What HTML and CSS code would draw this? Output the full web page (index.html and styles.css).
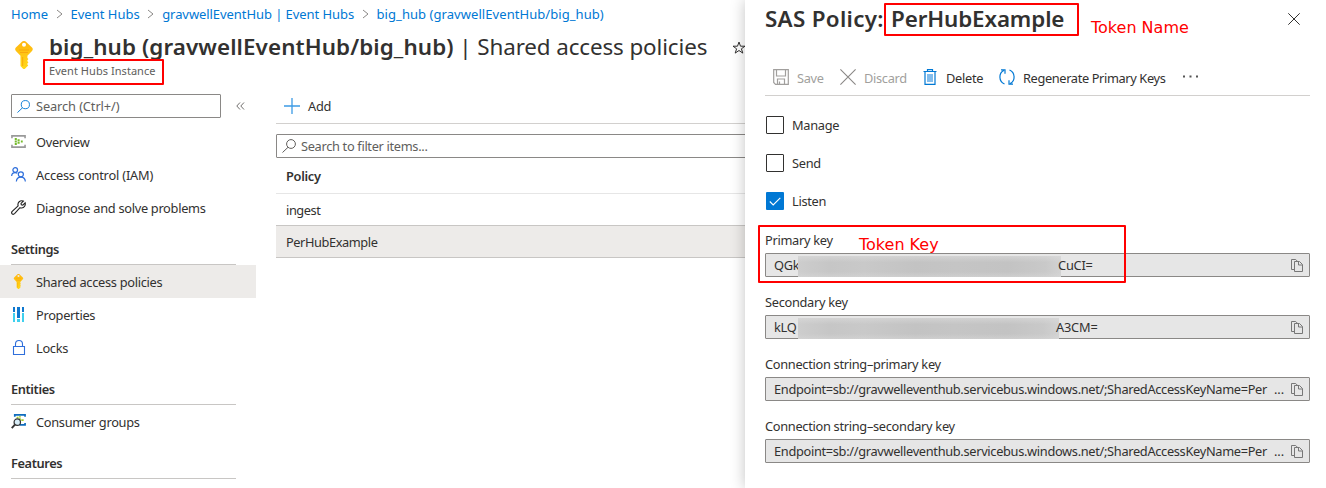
FILE: index.html
```html
<!DOCTYPE html>
<html lang="en">
<head>
<meta charset="utf-8">
<title>Shared access policies</title>
<link rel="stylesheet" href="styles.css">
</head>
<body>
<svg width="0" height="0" class="defs">
  <defs>
    <linearGradient id="gold" x1="0" y1="0" x2="0" y2="1"><stop offset="0" stop-color="#ffb50f"/><stop offset="1" stop-color="#ffd91a"/></linearGradient>
    <symbol id="key" viewBox="0 0 18 28">
      <path fill="url(#gold)" fill-rule="evenodd" d="M9 0c1 0 1.600.3 2.200.9l5.800 5.700c1 1 1 2.200 0 3.300l-4.600 4.800V17l1 1-1 1.200v1l1 1-1 1.200v1l.8 1-3 3.200c-.8.800-1.600.800-2.400 0L5.500 25V14.700L.9 9.900c-1-1.100-1-2.300 0-3.300L6.700.9C7.300.3 8 0 9 0zm0 1.700a2 2 0 1 0 0 4 2 2 0 0 0 0-4z"/>
      <path fill="#f9a80c" d="M4 8.500h10v1.100H4zM5 11h8v1H5zM7.200 16h1v9h-1z"/>
    </symbol>
    <symbol id="copy" viewBox="0 0 12 13">
      <path fill="none" stroke="#777" d="M3.500 10.500h-3V.5h4.200l1.500 1.500M3.500 2.500h5l3 3v7h-8zM7.500 2.500v3.500h4"/>
    </symbol>
    <symbol id="lens" viewBox="0 0 14 14">
      <circle cx="9" cy="5" r="4.400" fill="none" stroke="currentColor"/><path d="M6 8.300.5 13.500" stroke="currentColor"/>
    </symbol>
    <symbol id="sep" viewBox="0 0 7 10"><path d="M1 1l5 4-5 4" fill="none" stroke="#8a8886"/></symbol>
  </defs>
</svg>

<div class="page">
  <nav class="crumbs">
    <a class="c1">Home</a><svg><use href="#sep"/></svg>
    <a class="c2">Event Hubs</a><svg><use href="#sep"/></svg>
    <a class="c3">gravwellEventHub | Event Hubs</a><svg><use href="#sep"/></svg>
    <a class="c4">big_hub (gravwellEventHub/big_hub)</a>
  </nav>

  <header class="title">
    <svg class="bigkey"><use href="#key"/></svg>
    <div class="titletext">
      <h1><b>big_hub (gravwellEventHub/big_hub)</b><span> | Shared access policies</span></h1>
      <p>Event Hubs Instance</p>
      <i class="mark mark-sub"></i>
    </div>
    <svg class="star" viewBox="0 0 14 13"><path d="M7 1l1.500 4.200H13L9.400 7.800l1.400 4.300L7 9.500l-3.800 2.600 1.400-4.300L1 5.200h4.500z" fill="none" stroke="#323130" stroke-width="1"/></svg>
  </header>

  <div class="body">
    <aside>
      <div class="find"><div class="box blue"><svg><use href="#lens"/></svg><span>Search (Ctrl+/)</span></div>
        <svg class="fold" viewBox="0 0 9 8"><path d="M4 .5.8 4 4 7.500M8 .5 4.800 4 8 7.500" fill="none" stroke="#605e5c" stroke-width=".9"/></svg></div>
      <ul>
        <li><svg viewBox="0 0 16 16"><path d="M1 4.500V2h14v2.500M1 11.500V14h14v-2.500" fill="none" stroke="#999" stroke-width="1.700"/><path fill="#76bc2d" d="M4 4.200h2.200v2.100H4zM4 6.900h2.200V9H4zM4 9.600h2.200v2.100H4zM7 5.600h2.200v2.100H7zM7 8.300h2.200v2.100H7zM10.500 7h2v2h-2z"/></svg><span>Overview</span></li>
        <li><svg viewBox="0 0 16 16"><g fill="none" stroke="#2f6fdb" stroke-width="1.300"><circle cx="4.500" cy="3.200" r="2.500"/><circle cx="10.500" cy="7.800" r="2.700"/><path d="M.7 9.500C.8 7.300 2 5.900 4.300 5.900c1 0 1.800.3 2.500.8M5.700 15.500c.2-3 2-4.700 4.800-4.700s4.600 1.700 4.800 4.700"/></g></svg><span class="iam">Access control (IAM)</span></li>
        <li><svg viewBox="0 0 16 16"><path d="M13.200 1.200 10.700 3.600l.3 1.500 1.600.3 2.500-2.400c.7 2.700-1 5.300-3.700 5.500-.8 0-1.200-.1-1.800-.3L3.800 14.600c-1.900 1.700-4.200-.6-2.500-2.400L7.600 6.200C6.600 2.700 9.700-.2 13.200 1.200z" fill="none" stroke="#222" stroke-width="1.200"/></svg><span>Diagnose and solve problems</span></li>
      </ul>
      <h2>Settings</h2>
      <ul>
        <li class="on"><svg><use href="#key"/></svg><span>Shared access policies</span></li>
        <li><svg viewBox="0 0 15 15"><path fill="#0f78cf" d="M2 0h2v5H2zM6 0h3v11H6zM11 0h2v5h-2z"/><path fill="#3fd0ee" d="M2 6h2v9H2zM6 12h3v3H6zM11 6h2v9h-2z"/></svg><span>Properties</span></li>
        <li><svg viewBox="0 0 15 15"><path d="M2.500 6.500h11v8h-11zM4.500 6.500V4c0-4.600 7-4.600 7 0v2.500" fill="none" stroke="#2f6fdb" stroke-width="1.100"/></svg><span>Locks</span></li>
      </ul>
      <h2>Entities</h2>
      <ul>
        <li><svg viewBox="0 0 16 16"><path d="M4 3V1h11v2M9 11.500h6v-2" fill="none" stroke="#0f6cbd" stroke-width="1.800"/><path fill="#a4cf2c" d="M6 3h2v1.500H6zM8.500 4.500h2V6h-2zM11 5.500h2.500v2H11zM8.500 2.500h2v1.200h-2z"/><circle cx="6.700" cy="8.700" r="3.400" fill="#d8eef8" stroke="#333" stroke-width="1.300"/><path d="M4.200 11.300.8 15" stroke="#333" stroke-width="2"/></svg><span>Consumer groups</span></li>
      </ul>
      <h2>Features</h2>
    </aside>

    <main>
      <div class="add"><svg viewBox="0 0 16 16"><path d="M8 0v16M0 8h16" stroke="#3c9be5" stroke-width="1.300"/></svg><span>Add</span></div>
      <div class="box filter"><svg><use href="#lens"/></svg><span>Search to filter items...</span></div>
      <div class="th"><span>Policy</span></div>
      <div class="td"><span>ingest</span></div>
      <div class="td on"><span>PerHubExample</span></div>
    </main>
  </div>
</div>

<section class="blade">
  <div class="bladehead">
    <h1><span class="sas">SAS Policy:</span><span class="phe">PerHubExample</span></h1>
    <svg class="close" viewBox="0 0 12 12"><path d="M.3.3l11.400 11.400M11.700.3.3 11.700" stroke="#323130"/></svg>
    <i class="mark mark-name"></i><em class="note note-name">Token Name</em>
  </div>
  <div class="tools">
    <div class="off t1"><svg viewBox="0 0 16 16"><path d="M.7.700h14.600v14.600H2.500L.7 13.500zM3.500 1v6h9V1M4.500 15v-5h7v5M6.500 12.500V15" fill="none" stroke="#a19f9d" stroke-width="1.200"/></svg><span>Save</span></div>
    <div class="off t2"><svg viewBox="0 0 16 16"><path d="M.4.400l15.200 15.200M15.600.4.4 15.600" stroke="#8a8886" stroke-width="1.100"/></svg><span>Discard</span></div>
    <div class="t3"><svg viewBox="0 0 14 16"><path d="M4 5h6v8H4z" fill="#83bdec"/><path d="M.5 2.500h13M4.500 2V.6h5V2M2 3v12.300h10V3" fill="none" stroke="#0078d4" stroke-width="1.200"/></svg><span>Delete</span></div>
    <div class="t4"><svg viewBox="0 0 16 16"><path d="M5.500 15C-.5 12.500-.5 4 4.800 1.500M2 .8h4v4M10.500 1c6 2.500 6 11 .7 13.500M14 15.200h-4v-4" fill="none" stroke="#0078d4" stroke-width="1.200"/></svg><span>Regenerate Primary Keys</span></div>
    <svg class="more" viewBox="0 0 15 3"><path fill="#555" d="M0 .5h2v2H0zM6.500.5h2v2h-2zM13 .5h2v2h-2z"/></svg>
  </div>
  <div class="checks">
    <label><i></i><span>Manage</span></label>
    <label><i></i><span>Send</span></label>
    <label><i class="tick"><svg viewBox="0 0 12 9"><path d="M.8 4.500l3.400 3.400L11.300.8" fill="none" stroke="#fff" stroke-width="1.100"/></svg></i><span>Listen</span></label>
  </div>
  <div class="fields">
    <div class="field"><span class="lab">Primary key</span><div class="val"><span class="k1">QGk</span><i class="smudge sm1"></i><span class="k2">CuCI=</span><svg><use href="#copy"/></svg></div></div>
    <div class="field"><span class="lab">Secondary key</span><div class="val"><span class="k1">kLQ</span><i class="smudge sm2"></i><span class="k2">A3CM=</span><svg><use href="#copy"/></svg></div></div>
    <div class="field"><span class="lab">Connection string–primary key</span><div class="val"><span class="conn">Endpoint=sb://gravwelleventhub.servicebus.windows.net/;SharedAccessKeyName=Per</span><span class="dots">...</span><svg><use href="#copy"/></svg></div></div>
    <div class="field"><span class="lab">Connection string–secondary key</span><div class="val"><span class="conn">Endpoint=sb://gravwelleventhub.servicebus.windows.net/;SharedAccessKeyName=Per</span><span class="dots">...</span><svg><use href="#copy"/></svg></div></div>
    <i class="mark mark-key"></i><em class="note note-key">Token Key</em>
  </div>
</section>
</body>
</html>
```
FILE: styles.css
```css
* { box-sizing: border-box; margin: 0; padding: 0; }
body { width: 1326px; height: 488px; overflow: hidden; position: relative; background: #fff; color: #323130; font: 12.8px/18px "Noto Sans", sans-serif; letter-spacing: -.3px; white-space: nowrap; }
.defs { position: absolute; }
svg { display: block; flex: none; }
ul { list-style: none; }

.page { height: 488px; overflow: hidden; }
.crumbs { display: flex; align-items: center; height: 28px; padding-left: 11px; color: #0078d4; font-size: 13px; letter-spacing: 0; }
.crumbs svg { width: 7px; height: 10px; margin: 0 8px 0 7.500px; }
.c3 { letter-spacing: -.07px; }
.c4 { letter-spacing: .06px; }
.title { display: flex; height: 66px; padding-left: 15px; }
.bigkey { width: 18px; height: 28px; margin-top: 13px; }
.titletext { position: relative; margin-left: 16px; width: 658px; }
h1 { font-size: 22.400px; line-height: 30px; font-weight: 400; margin-top: 4px; letter-spacing: -.11px; }
h1 b { font-weight: 600; letter-spacing: .09px; }
.title p { font-size: 11px; line-height: 16px; margin-top: 1px; color: #605e5c; letter-spacing: .05px; }
.star { width: 14px; height: 13px; margin: 13px 0 0 25px; }

.body { display: flex; }
aside { width: 256px; }
.find { display: flex; align-items: center; padding-left: 11px; height: 24px; margin-bottom: 7px; }
.box { display: flex; align-items: center; height: 24px; border: 1px solid #8a8886; border-radius: 1px; color: #605e5c; padding-left: 5px; }
.box svg { width: 14px; height: 14px; margin-right: 5px; }
.box span { letter-spacing: -.32px; }
.blue { width: 210px; }
.blue svg { color: #0078d4; width: 13px; height: 13px; margin-right: 6px; }
.blue span { letter-spacing: -.1px; }
.fold { width: 9px; height: 8px; margin-left: 15px; }
li { display: flex; align-items: center; height: 33px; padding-left: 11px; }
li svg { width: 15px; height: 15px; margin-right: 10px; }
.iam { letter-spacing: -.19px; }
.on { background: #edebe9; }
h2 { font-size: 12.800px; letter-spacing: -.38px; font-weight: 600; line-height: 18px; height: 41px; margin: 0 20px 0 11px; padding-top: 16px; border-bottom: 1px solid #c8c6c4; }

main { flex: 1; padding-left: 20px; }
.add { display: flex; align-items: center; height: 30px; padding: 0 0 6px 8px; border-bottom: 1px solid #d2d0ce; }
.add svg { width: 16px; height: 16px; margin-right: 8px; }
.filter { margin-top: 10px; }
.th, .td { display: flex; align-items: center; padding-left: 10px; }
.th { height: 36px; font-weight: 600; border-bottom: 1px solid #e6e6e6; }
.td { height: 31px; padding-top: 1px; letter-spacing: -.42px; }
.td.on { height: 33px; padding-top: 0; border: solid #c8c6c4; border-width: 1px 0; }

.blade { position: absolute; top: 0; right: 0; width: 581px; height: 488px; padding: 0 16px 0 20px; background: #fff; box-shadow: 0 0 14px rgba(0,0,0,.24); }
.bladehead { position: relative; display: flex; justify-content: space-between; height: 60px; }
.blade h1 { display: flex; font-weight: 600; letter-spacing: 0; }
.sas { width: 126px; letter-spacing: .3px; }
.phe { letter-spacing: -.12px; }
.close { width: 12px; height: 12px; margin: 13px 10px 0 0; }
.tools { display: flex; align-items: center; height: 36px; padding: 0 0 1px 8px; border-bottom: 1px solid #d2d0ce; }
.tools > div { display: flex; align-items: center; }
.tools div svg { width: 16px; height: 16px; margin: -1px 8px 0 0; }
.tools span { position: relative; top: 1px; }
.off { color: #a19f9d; }
.t1 { width: 67px; }
.t2 { width: 83px; }
.t3 { width: 76px; }
.tools .t3 svg { width: 14px; margin-right: 9px; }
.t4 { width: 184px; letter-spacing: -.37px; }
.more { width: 15px; height: 3px; margin-top: -1px; }
.checks { padding-top: 19px; height: 125px; }
label { display: flex; align-items: center; height: 20px; margin-bottom: 18px; }
label > i { width: 18px; height: 18px; margin: 0 8px 0 1px; border: 1px solid #323130; border-radius: 1px; }
label > .tick { border: 0; background: #0078d4; display: flex; align-items: center; justify-content: center; }
.tick svg { width: 12px; height: 9px; }
.fields { position: relative; padding-top: 10px; }
.field { height: 62px; }
.lab { display: block; height: 22px; line-height: 18px; }
.val { display: flex; align-items: center; height: 24px; padding: 0 6px 0 8px; border: 1px solid #8a8886; border-radius: 1px; background: #e6e6e6; }
.val svg { width: 12px; height: 13px; margin-left: auto; }
.k1 { width: 24px; }
.k2 { letter-spacing: -.2px; }
.smudge { position: relative; top: 1px; height: 21px; background: linear-gradient(#dcdcdc99, #dcdcdc00 30%, #dcdcdc00 75%, #d8d8d888), linear-gradient(90deg, #cdcdcd, #c6c6c6 12%, #c9c9c9 25%, #c3c3c3 45%, #c5c5c5 60%, #c3c3c3 80%, #c9c9c9 94%, #d2d2d2); }
.sm1 { width: 263px; margin-right: -3px; }
.sm2 { width: 261px; margin-right: -3px; }
.k1 + i + .k2 { position: relative; }
.conn { letter-spacing: -.32px; }
.dots { margin-left: auto; margin-right: 7px; letter-spacing: -.1px; }
.val .dots + svg { margin-left: 0; }

.mark { position: absolute; border: 2px solid #f00; border-radius: 1px; }
.mark-sub { left: -6px; top: 31px; width: 121px; height: 26px; }
.mark-name { left: 119px; top: 3px; width: 195px; height: 33px; }
.mark-key { left: -7px; top: 4px; width: 368px; height: 58px; }
.note { position: absolute; color: #f00; font: normal 16px/20px "DejaVu Sans", sans-serif; letter-spacing: 0; }
.note-name { left: 326px; top: 18px; }
.note-key { left: 94px; top: 14px; }
```
